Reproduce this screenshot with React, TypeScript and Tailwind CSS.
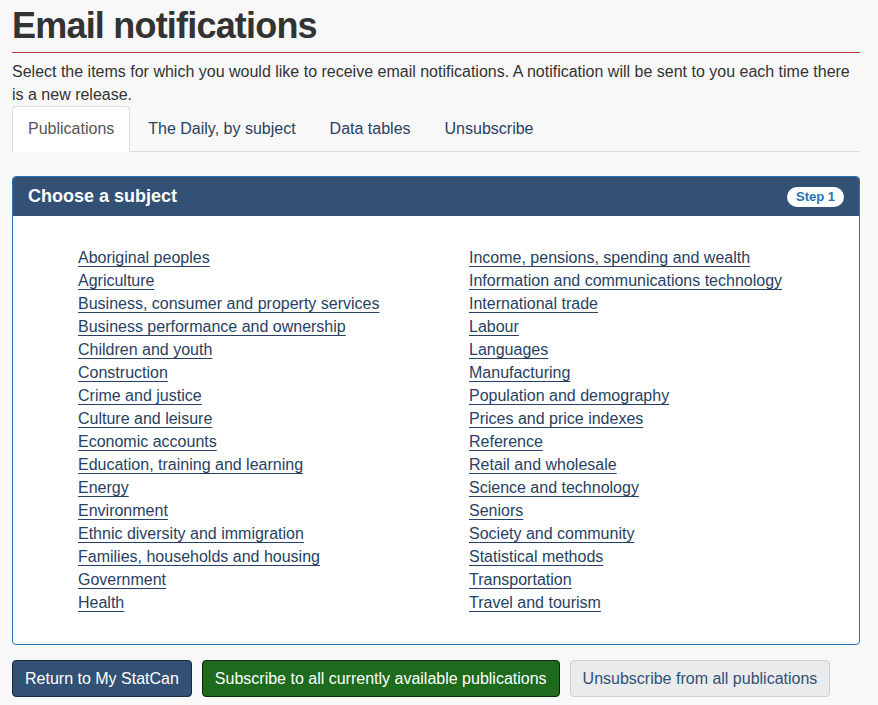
const LEFT_SUBJECTS = [
  "Aboriginal peoples",
  "Agriculture",
  "Business, consumer and property services",
  "Business performance and ownership",
  "Children and youth",
  "Construction",
  "Crime and justice",
  "Culture and leisure",
  "Economic accounts",
  "Education, training and learning",
  "Energy",
  "Environment",
  "Ethnic diversity and immigration",
  "Families, households and housing",
  "Government",
  "Health",
];

const RIGHT_SUBJECTS = [
  "Income, pensions, spending and wealth",
  "Information and communications technology",
  "International trade",
  "Labour",
  "Languages",
  "Manufacturing",
  "Population and demography",
  "Prices and price indexes",
  "Reference",
  "Retail and wholesale",
  "Science and technology",
  "Seniors",
  "Society and community",
  "Statistical methods",
  "Transportation",
  "Travel and tourism",
];

const TABS = ["Publications", "The Daily, by subject", "Data tables", "Unsubscribe"];

function SubjectList({ items }: { items: string[] }) {
  return (
    <ul className="flex flex-col">
      {items.map((item) => (
        <li key={item} className="leading-[23px]">
          <a href="#" className="text-[#284162] underline underline-offset-[3px] decoration-1">
            {item}
          </a>
        </li>
      ))}
    </ul>
  );
}

export default function App() {
  return (
    <div className="min-h-[705px] bg-[#f8f8f8] font-['Liberation_Sans',Arial,sans-serif] text-[16px] leading-[23px] text-[#333]">
      <div className="w-[848px] ml-[12px] pt-[6px]">
        <h1 className="border-b border-[#af3c43] pb-[6px] text-[36px] font-bold leading-[40px] tracking-[-0.8px] text-[#333]">
          Email notifications
        </h1>
        <p className="mt-[7px]">
          Select the items for which you would like to receive email notifications. A notification will be sent to you each time there is a new release.
        </p>

        <div className="flex border-b border-[#ddd]">
          {TABS.map((tab, i) =>
            i === 0 ? (
              <span
                key={tab}
                className="-mb-px mr-[2px] rounded-t-[4px] border border-[#ddd] border-b-transparent bg-white px-[15px] py-[10px] text-[#555]"
              >
                {tab}
              </span>
            ) : (
              <span key={tab} className="mr-[2px] border border-transparent px-[15px] py-[10px] text-[#284162]">
                {tab}
              </span>
            )
          )}
        </div>

        <section className="mt-[24px] overflow-hidden rounded-[4px] border border-[#2572b4] bg-white">
          <div className="flex h-[39px] items-center justify-between bg-[#335075] pl-[15px] pr-[15px]">
            <h3 className="text-[18px] font-bold text-white">Choose a subject</h3>
            <span className="rounded-full bg-white px-[9px] text-[13px] font-bold leading-[20px] text-[#2572b4]">
              Step 1
            </span>
          </div>
          <div className="grid grid-cols-[391px_1fr] pb-[30px] pl-[65px] pt-[30px]">
            <SubjectList items={LEFT_SUBJECTS} />
            <SubjectList items={RIGHT_SUBJECTS} />
          </div>
        </section>

        <div className="mt-[15px] flex gap-[10px]">
          <button className="rounded-[4px] border border-[#1c2a3e] bg-[#335075] px-[12px] py-[6px] text-white">
            Return to My StatCan
          </button>
          <button className="rounded-[4px] border border-[#0b2a0b] bg-[#1e6b1e] px-[12px] py-[6px] text-white">
            Subscribe to all currently available publications
          </button>
          <button className="rounded-[4px] border border-[#cdcfd3] bg-[#eaebed] px-[12px] py-[6px] text-[#335075]">
            Unsubscribe from all publications
          </button>
        </div>
      </div>
    </div>
  );
}
